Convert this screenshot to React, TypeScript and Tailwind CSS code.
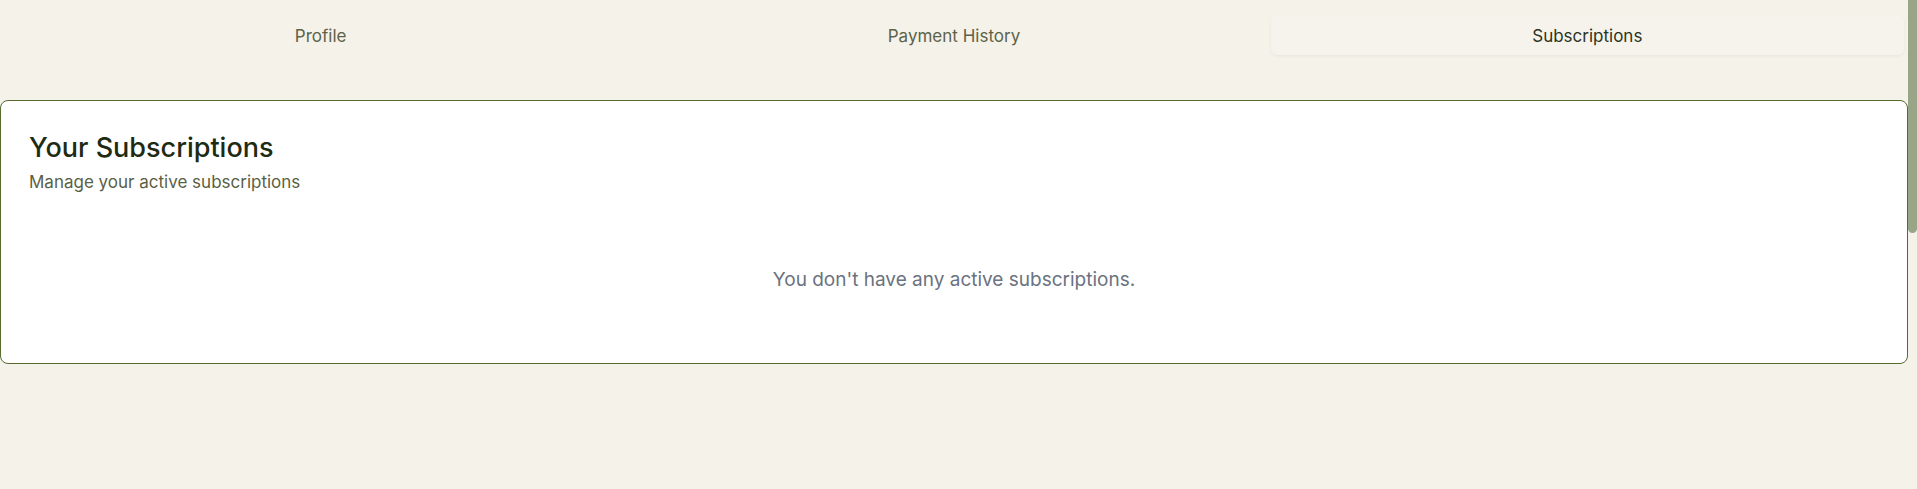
import { useState } from "react";

const tabs = ["Profile", "Payment History", "Subscriptions"];

export default function App() {
  const [active, setActive] = useState("Subscriptions");

  return (
    <div className="flex h-screen overflow-hidden bg-[#f5f2ea] font-['Inter',sans-serif]">
      <div className="min-w-0 flex-1">
        {/* Tabs */}
        <div className="mt-[11px] grid grid-cols-3 p-1">
          {tabs.map((tab) => (
            <button
              key={tab}
              onClick={() => setActive(tab)}
              className={
                tab === active
                  ? "h-10 rounded-md bg-[#f6f3ed] pt-[4px] text-[17px] text-[#2c3322] shadow-[0_1px_3px_rgba(0,0,0,0.06)]"
                  : "h-10 rounded-md pt-[4px] text-[17px] text-[#5e6348]"
              }
            >
              {tab}
            </button>
          ))}
        </div>

        {/* Card */}
        <div className="mt-[41px] rounded-lg border border-[#556b2f] bg-white">
          <div className="px-7 pt-[31px]">
            <h2 className="text-[27px] leading-[32px] font-medium text-[#1e2a12]">
              Your Subscriptions
            </h2>
            <p className="mt-[6px] text-[17px] leading-6 text-[#5a5f45]">
              Manage your active subscriptions
            </p>
          </div>
          <div className="pt-[72px] pb-[69px] text-center text-[19px] leading-7 text-[#6b7280]">
            You don't have any active subscriptions.
          </div>
        </div>
      </div>

      {/* Scrollbar */}
      <div className="w-[9px] shrink-0">
        <div className="h-[233px] rounded-b-full bg-[#98a586]" />
      </div>
    </div>
  );
}
